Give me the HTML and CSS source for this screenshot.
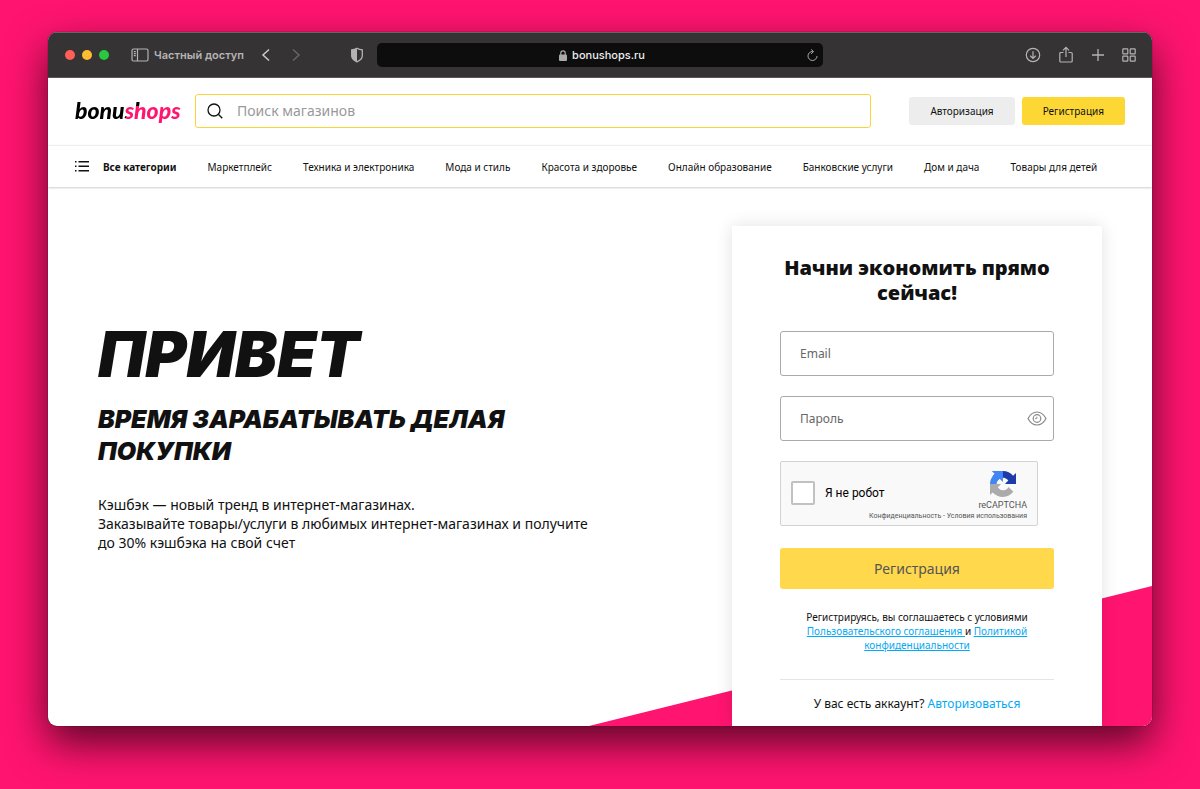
FILE: index.html
```html
<!DOCTYPE html>
<html lang="ru">
<head>
<meta charset="utf-8">
<meta name="viewport" content="width=device-width, initial-scale=1">
<title>bonushops</title>
<link rel="stylesheet" href="styles.css">
</head>
<body>
<div class="window">
  <div class="toolbar">
    <div class="toolbar-left">
      <div class="lights"><span class="light red"></span><span class="light amber"></span><span class="light green"></span></div>
      <button class="tool private" type="button">
        <svg width="18" height="14" viewBox="0 0 18 14" fill="none" stroke="currentColor" stroke-width="1.2"><rect x="1" y="1" width="16" height="12" rx="1.5"/><path d="M6.5 1v12M2.8 3.6h2M2.8 5.6h2M2.8 7.6h2"/></svg>
        <span>Частный доступ</span>
      </button>
      <button class="tool back" type="button" aria-label="Назад"><svg width="10" height="14" viewBox="0 0 10 14" fill="none" stroke="currentColor" stroke-width="1.5"><path d="M8 1.5 2 7l6 5.5"/></svg></button>
      <button class="tool forward" type="button" aria-label="Вперёд"><svg width="10" height="14" viewBox="0 0 10 14" fill="none" stroke="currentColor" stroke-width="1.5"><path d="m2 1.5 6 5.5-6 5.5"/></svg></button>
      <button class="tool shield" type="button" aria-label="Защита"><svg width="14" height="16" viewBox="0 0 14 16"><path d="M7 1.2c1.7 1 3.4 1.5 5.3 1.6v6c0 2.9-2.5 4.8-5.3 6-2.8-1.2-5.3-3.1-5.3-6v-6C3.6 2.7 5.3 2.2 7 1.2z" fill="none" stroke="currentColor" stroke-width="1.3"/><path d="M7 1.2v13.6c-2.8-1.2-5.3-3.1-5.3-6v-6C3.6 2.7 5.3 2.2 7 1.2z" fill="currentColor"/></svg></button>
    </div>
    <div class="address">
      <span class="host"><svg width="8" height="11" viewBox="0 0 8 11"><rect y="4.5" width="8" height="6.5" rx="1" fill="#aaa"/><path d="M1.8 5V3a2.2 2.2 0 0 1 4.4 0v2" fill="none" stroke="#aaa" stroke-width="1.2"/></svg>bonushops.ru</span>
      <button class="tool" type="button" aria-label="Обновить"><svg width="11" height="13" viewBox="0 0 11 13" fill="none" stroke="#aaa"><path d="M5.8 2.5A4.5 4.5 0 1 0 10 7M4.2.4l2.4 2.2-2.4 2.2"/></svg></button>
    </div>
    <div class="toolbar-right">
      <button class="tool" type="button" aria-label="Загрузки"><svg width="16" height="16" viewBox="0 0 16 16" fill="none" stroke="currentColor" stroke-width="1.2"><circle cx="8" cy="8" r="6.7"/><path d="M8 4.2v7M5.2 8.7 8 11.4l2.8-2.7"/></svg></button>
      <button class="tool" type="button" aria-label="Поделиться"><svg width="16" height="18" viewBox="0 0 16 18" fill="none" stroke="currentColor" stroke-width="1.2"><path d="M5.5 6.5H2.8a1 1 0 0 0-1 1V15a1 1 0 0 0 1 1h10.4a1 1 0 0 0 1-1V7.5a1 1 0 0 0-1-1h-2.7M8 11V1.5M5 4.4l3-3 3 3"/></svg></button>
      <button class="tool" type="button" aria-label="Новая вкладка"><svg width="14" height="14" viewBox="0 0 14 14" stroke="currentColor" stroke-width="1.3"><path d="M7 1v12M1 7h12"/></svg></button>
      <button class="tool" type="button" aria-label="Обзор вкладок"><svg width="14" height="14" viewBox="0 0 14 14" fill="none" stroke="currentColor" stroke-width="1.2"><rect x=".8" y=".8" width="5" height="5" rx=".6"/><rect x="8.2" y=".8" width="5" height="5" rx=".6"/><rect x=".8" y="8.2" width="5" height="5" rx=".6"/><rect x="8.2" y="8.2" width="5" height="5" rx=".6"/></svg></button>
    </div>
  </div>

  <header class="header">
    <a class="logo" href="#">bonushops</a>
    <label class="search">
      <svg width="16" height="16" viewBox="0 0 16 16" fill="none" stroke="#111" stroke-width="1.3"><circle cx="7" cy="7" r="6"/><path d="m11.3 11.3 4 4"/></svg>
      <input type="search" placeholder="Поиск магазинов" aria-label="Поиск магазинов">
    </label>
    <div class="actions">
      <button class="btn login" type="button">Авторизация</button>
      <button class="btn signup" type="button">Регистрация</button>
    </div>
  </header>

  <nav class="nav">
    <a class="all" href="#"><svg width="14" height="11" viewBox="0 0 14 11" fill="#111"><path d="M0 0h1.5v1.5H0zM3.5 0H14v1.5H3.5zM0 4.5h1.5V6H0zM3.5 4.5H14V6H3.5zM0 9h1.5v1.5H0zM3.5 9H14v1.5H3.5z"/></svg>Все категории</a>
    <a href="#">Маркетплейс</a>
    <a href="#">Техника и электроника</a>
    <a href="#">Мода и стиль</a>
    <a href="#">Красота и здоровье</a>
    <a href="#">Онлайн образование</a>
    <a href="#">Банковские услуги</a>
    <a href="#">Дом и дача</a>
    <a href="#">Товары для детей</a>
  </nav>

  <main class="hero">
    <section class="intro">
      <h1>ПРИВЕТ</h1>
      <h2>ВРЕМЯ ЗАРАБАТЫВАТЬ ДЕЛАЯ<br>ПОКУПКИ</h2>
      <p>Кэшбэк — новый тренд в интернет-магазинах.<br>Заказывайте товары/услуги в любимых интернет-магазинах и получите<br>до 30% кэшбэка на свой счет</p>
    </section>
    <form class="card">
      <h3>Начни экономить прямо сейчас!</h3>
      <div class="field"><input type="email" placeholder="Email" aria-label="Email"></div>
      <div class="field">
        <input type="password" placeholder="Пароль" aria-label="Пароль">
        <button class="eye" type="button" aria-label="Показать пароль"><svg width="20" height="15" viewBox="0 0 20 15" fill="none" stroke="#888" stroke-width="1.2"><path d="M1 7.5C3.2 3.4 6.3 1 10 1s6.8 2.4 9 6.5C16.8 11.6 13.7 14 10 14s-6.8-2.4-9-6.5z"/><circle cx="10" cy="7.5" r="3.8"/><path d="M9.8 5.6v2H8" stroke-width=".9"/></svg></button>
      </div>
      <div class="captcha">
        <label class="robot"><input type="checkbox"><span>Я не робот</span></label>
        <div class="brand">
          <svg width="26" height="26" viewBox="0 0 64 64"><path d="M64 31.955l-.033-1.37V4.687l-7.16 7.16C50.904 4.674 41.993.093 32.02.093c-10.38 0-19.6 4.96-25.442 12.64l11.736 11.86a15.55 15.55 0 0 1 4.754-5.334c2.05-1.6 4.952-2.906 8.968-2.906.485 0 .86.057 1.135.163 4.976.393 9.288 3.14 11.828 7.124l-8.307 8.307L64 31.953" fill="#1c3aa9"/><path d="M31.862.094l-1.37.033H4.594l7.16 7.16C4.58 13.147 0 22.06 0 32.03c0 10.38 4.96 19.6 12.64 25.442L24.5 45.736a15.55 15.55 0 0 1-5.334-4.754c-1.6-2.05-2.906-4.952-2.906-8.968 0-.485.057-.86.163-1.135.393-4.976 3.14-9.288 7.124-11.828l8.307 8.307L31.86.095" fill="#4285f4"/><path d="M.001 32.045l.033 1.37v25.898l7.16-7.16c5.86 7.173 14.774 11.754 24.74 11.754 10.38 0 19.6-4.96 25.442-12.64L45.64 39.407a15.55 15.55 0 0 1-4.754 5.334c-2.05 1.6-4.952 2.906-8.968 2.906-.485 0-.86-.057-1.135-.163-4.976-.393-9.288-3.14-11.828-7.124l8.307-8.307c-10.522.04-22.4.066-27.295-.005" fill="#ababab"/></svg>
          <span>reCAPTCHA</span>
        </div>
        <div class="terms"><a href="#">Конфиденциальность</a> - <a href="#">Условия использования</a></div>
      </div>
      <button class="submit" type="submit">Регистрация</button>
      <p class="legal">Регистрируясь, вы соглашаетесь с условиями <a href="#">Пользовательского соглашения </a>и <a href="#">Политикой конфиденциальности</a></p>
      <p class="account">У вас есть аккаунт? <a href="#">Авторизоваться</a></p>
    </form>
  </main>
</div>
</body>
</html>
```
FILE: styles.css
```css
* { box-sizing: border-box; }

body {
  margin: 0;
  padding: 32px 48px 63px;
  background: #ff146f;
  color: #111;
  font-family: "Noto Sans", "Open Sans", sans-serif;
  font-size: 14px;
}

h1, h2, h3, p { margin: 0; }
a { color: inherit; text-decoration: none; }
button, input { font: inherit; color: inherit; }
button { padding: 0; border: 0; background: none; }
svg { display: block; flex: none; }

.window {
  overflow: hidden;
  border-radius: 9px;
  background: #fff;
  box-shadow: 0 0 1px #000, 0 17px 40px rgba(0, 0, 0, .65);
}

.toolbar {
  display: grid;
  grid-template-columns: 329px minmax(0, 1fr) 329px;
  align-items: center;
  height: 46px;
  background: #353334;
  color: #b5b3b4;
  border-top: 1px solid #666;
  border-bottom: 1px solid #555;
  font-family: Inter, sans-serif;
  font-size: 11px;
}
.toolbar-left, .toolbar-right, .lights, .private { display: flex; align-items: center; }
.toolbar-left { padding: 0 13px 0 17px; }
.lights { gap: 7px; }
.light { width: 10px; height: 10px; border-radius: 50%; }
.red { background: #ff5f57; }
.amber { background: #febc2e; }
.green { background: #28c840; }
.private { gap: 5px; margin-left: 22px; font-weight: 600; }
.back { margin-left: 17px; color: #ccc; }
.forward { margin-left: 20px; color: #666; }
.shield { margin-left: auto; }
.address {
  display: flex;
  align-items: center;
  height: 24px;
  padding: 0 5px 0 20px;
  border-radius: 5px;
  background: #0d0d0d;
}
.host { display: flex; align-items: center; justify-content: center; gap: 5px; flex: 1; color: #eee; font-weight: 500; }
.toolbar-right { justify-content: flex-end; gap: 17px; padding-right: 16px; }

.header {
  display: flex;
  align-items: center;
  height: 67px;
  padding: 0 27px 2px;
}
.logo {
  width: 120px;
  padding-bottom: 2px;
  font: italic 900 23px/28px Lato, sans-serif;
  background:
    linear-gradient(#000, #000) 0 0 / 51px 100% no-repeat,
    linear-gradient(#000, #000) 51px 0 / 69px 10px no-repeat,
    linear-gradient(#ff146f, #ff146f) 51px 10px / 69px 20px no-repeat;
  -webkit-background-clip: text;
  background-clip: text;
  color: transparent;
}
.search {
  display: flex;
  align-items: center;
  flex: 1;
  gap: 14px;
  height: 34px;
  padding: 0 11px;
  border: 1px solid #fcd535;
  border-radius: 3px;
}
.search input { flex: 1; min-width: 0; padding: 0; border: 0; outline: 0; background: none; }
.search input::placeholder { color: #999; }
.actions { display: flex; gap: 7px; margin-left: 38px; }
.btn { height: 28px; padding: 0 21px; border-radius: 3px; font-size: 10px; }
.login { background: #ededed; }
.signup { background: #fdd835; }

.nav {
  display: flex;
  align-items: center;
  gap: 31px;
  height: 42px;
  padding: 0 27px;
  border-top: 1px solid #eee;
  box-shadow: 0 1px 2px rgba(0, 0, 0, .2);
  font-size: 10px;
  white-space: nowrap;
}
.all { display: flex; align-items: center; gap: 14px; font-weight: 700; }

.hero {
  position: relative;
  display: flex;
  align-items: flex-start;
  justify-content: space-between;
  padding: 39px 50px 0;
}
.hero::before {
  content: "";
  position: absolute;
  right: 0;
  bottom: 0;
  width: 51%;
  height: 140px;
  background: #ff146f;
  clip-path: polygon(100% 0, 100% 100%, 0 100%);
}
.intro { padding-top: 92px; }
.intro h1, .intro h2 { font-family: Inter, sans-serif; font-style: italic; font-weight: 900; }
.intro h1 { font-size: 63px; line-height: 72px; }
.intro h2 { margin-top: 13px; font-size: 25px; line-height: 32px; }
.intro p { margin-top: 28px; line-height: 19px; }

.card {
  position: relative;
  width: 370px;
  padding: 29px 48px 13px;
  background: #fff;
  box-shadow: 0 0 16px rgba(0, 0, 0, .12);
}
.card h3 { margin-bottom: 26px; font-family: "Open Sans", sans-serif; font-size: 20px; font-weight: 800; line-height: 25px; text-align: center; }
.field {
  display: flex;
  align-items: center;
  height: 45px;
  margin-bottom: 20px;
  padding: 0 6px 0 19px;
  border: 1px solid #aaa;
  border-radius: 3px;
}
.field input { flex: 1; min-width: 0; padding: 0; border: 0; outline: 0; background: none; font-size: 12px; }
.field input::placeholder { color: #666; }

.captcha {
  display: grid;
  grid-template-columns: 1fr auto;
  align-items: center;
  width: 258px;
  height: 65px;
  padding: 8px 10px 4px;
  border: 1px solid #d3d3d3;
  border-radius: 2px;
  background: #f9f9f9;
  font-family: Roboto, sans-serif;
}
.robot { display: flex; align-items: center; gap: 10px; padding-top: 4px; font-size: 12px; color: #000; }
.robot input { appearance: none; width: 24px; height: 24px; margin: 0; border: 2px solid #c1c1c1; border-radius: 2px; background: #fff; }
.brand { display: flex; flex-direction: column; align-items: center; gap: 2px; font-size: 9px; line-height: 12px; color: #555; }
.terms { grid-column: 1 / -1; text-align: right; font-size: 7px; line-height: 8px; color: #555; }

.submit {
  width: 100%;
  height: 41px;
  margin-top: 22px;
  border-radius: 3px;
  background: #ffd84c;
  color: #555;
  font-size: 14px;
}
.legal { margin-top: 21px; padding: 0 20px 27px; border-bottom: 1px solid #e5e5e5; text-align: center; font-size: 10px; line-height: 14px; }
.legal a { color: #03a9f4; text-decoration: underline; }
.account { margin-top: 15px; text-align: center; font-size: 12px; line-height: 18px; }
.account a { color: #03a9f4; }
```
